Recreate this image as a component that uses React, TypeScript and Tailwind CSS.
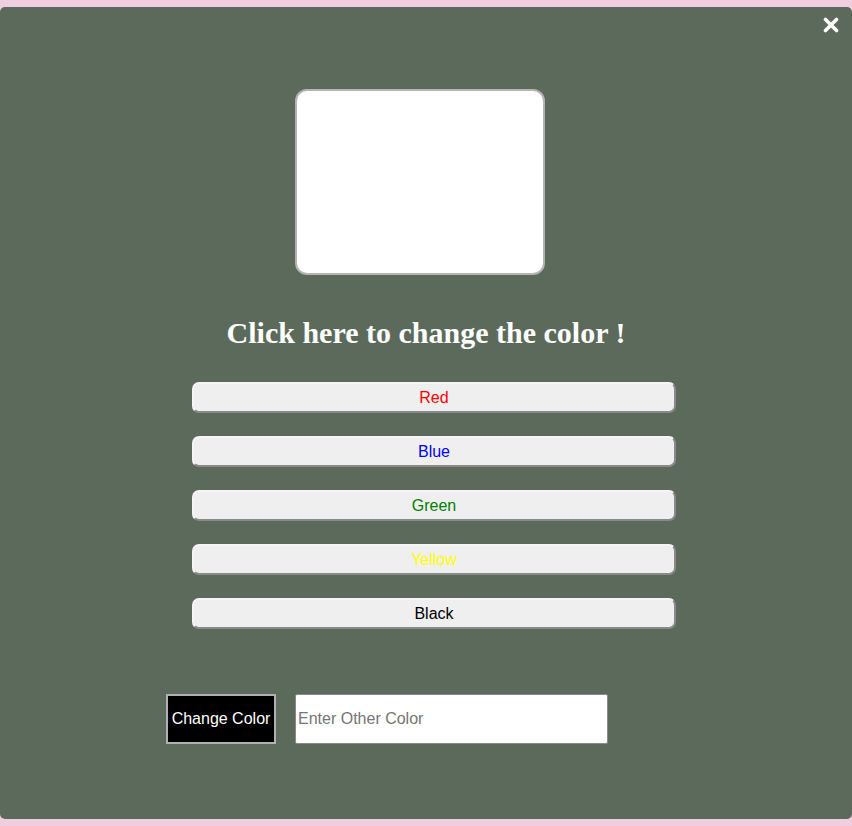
const colors = [
  { name: 'Red', text: 'text-[#ff0000]' },
  { name: 'Blue', text: 'text-[#0000ff]' },
  { name: 'Green', text: 'text-[#008000]' },
  { name: 'Yellow', text: 'text-[#ffff00]' },
  { name: 'Black', text: 'text-black' },
];

export default function App() {
  return (
    <div className="h-[826px] bg-[#efcee0] pt-[7px] pb-[7px] font-['Liberation_Sans',sans-serif]">
      <div className="relative h-[812px] rounded-[5px] bg-[#5c6a5c] flex flex-col items-center">
        {/* close */}
        <button className="absolute right-[13px] top-[10px] w-4 h-4">
          <svg viewBox="0 0 16 16" className="w-4 h-4">
            <path d="M2.5 2.5 L13.5 13.5 M13.5 2.5 L2.5 13.5" stroke="white" strokeWidth="3.6" strokeLinecap="round" />
          </svg>
        </button>

        {/* preview box */}
        <div className="mt-[82px] ml-[-12px] w-[250px] h-[186px] bg-white rounded-[12px] border-2 border-[#b4b4b4]" />

        <h1 className="mt-[40px] text-[30px] leading-[36px] font-bold text-white font-['Liberation_Serif',serif]">
          Click here to change the color !
        </h1>

        {/* color buttons */}
        <div className="mt-[31px] ml-[16px] flex flex-col gap-[23px]">
          {colors.map((c) => (
            <button
              key={c.name}
              className={`w-[484px] h-[31px] bg-[#efefef] rounded-[7px] border-2 border-t-[#f5f5f5] border-l-[#f5f5f5] border-b-[#8a8a8a] border-r-[#8a8a8a] text-[16px] ${c.text}`}
            >
              {c.name}
            </button>
          ))}
        </div>

        {/* custom color */}
        <div className="mt-[65px] flex items-center gap-[19px] ml-[-78px]">
          <button className="w-[110px] h-[50px] bg-black text-white text-[16px] border-2 border-[#b0b0b0]">
            Change Color
          </button>
          <input
            placeholder="Enter Other Color"
            className="w-[313px] h-[50px] bg-white border border-[#8a8a8a] rounded-[2px] px-[2px] text-[16px] placeholder:text-[#757575] outline-none"
          />
        </div>
      </div>
    </div>
  );
}
